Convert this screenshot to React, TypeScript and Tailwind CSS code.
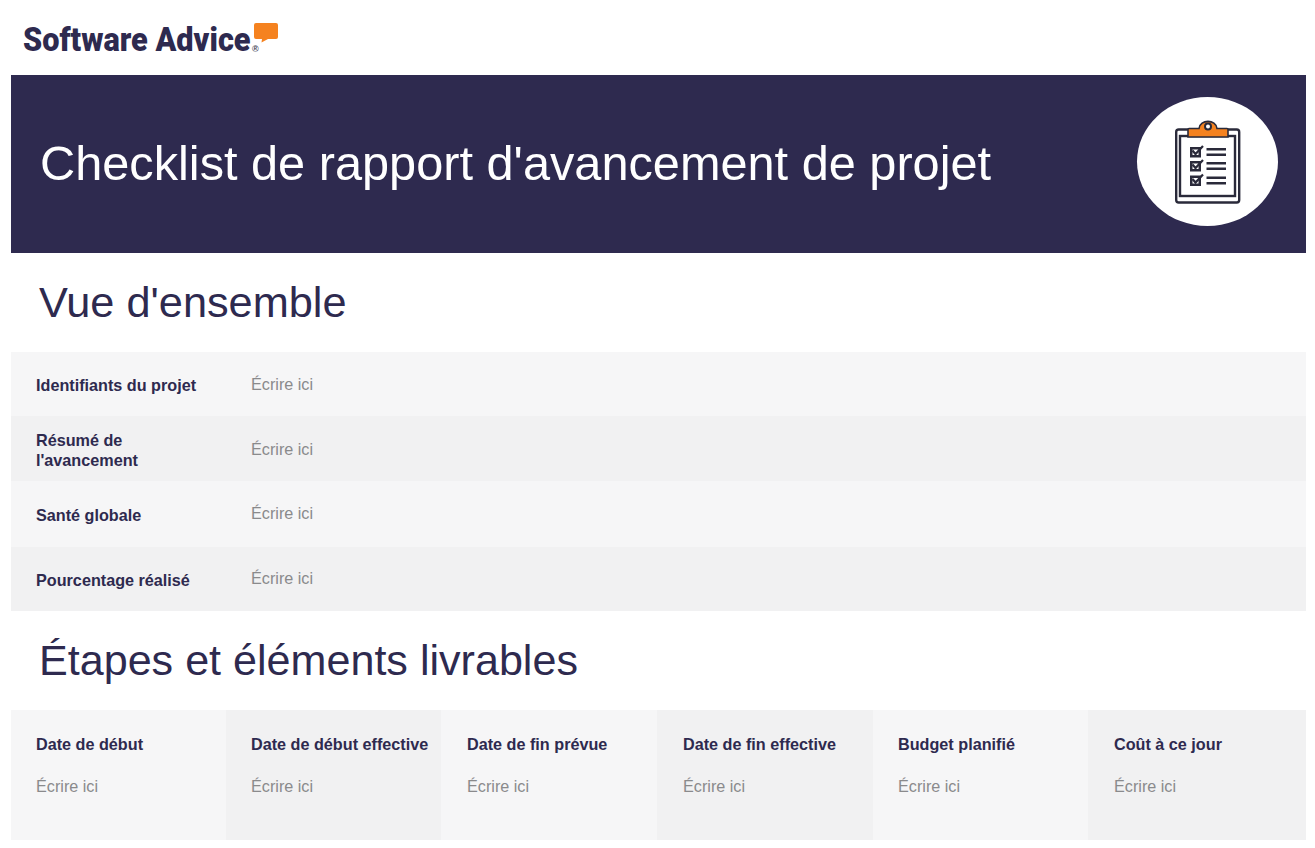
const rows = [
  { label: "Identifiants du projet", bg: "bg-[#f6f6f7]", h: "h-[64px]", labelTop: "pt-[1px]", valueTop: "mt-[1px]" },
  { label: "Résumé de l'avancement", bg: "bg-[#f1f1f2]", h: "h-[65px]", labelTop: "pt-[2px]", valueTop: "mt-[1px]" },
  { label: "Santé globale", bg: "bg-[#f6f6f7]", h: "h-[66px]", labelTop: "pt-[1px]", valueTop: "-mt-[2px]" },
  { label: "Pourcentage réalisé", bg: "bg-[#f1f1f2]", h: "h-[64px]", labelTop: "pt-[1px]", valueTop: "-mt-[1px]" },
];

const columns = [
  { label: "Date de début", bg: "bg-[#f6f6f7]", pad: "pl-[25px]" },
  { label: "Date de début effective", bg: "bg-[#f1f1f2]", pad: "pl-[25px]" },
  { label: "Date de fin prévue", bg: "bg-[#f6f6f7]", pad: "pl-[26px]" },
  { label: "Date de fin effective", bg: "bg-[#f1f1f2]", pad: "pl-[26px]" },
  { label: "Budget planifié", bg: "bg-[#f6f6f7]", pad: "pl-[25px]" },
  { label: "Coût à ce jour", bg: "bg-[#f1f1f2]", pad: "pl-[26px]" },
];

function CheckRow({ y }: { y: number }) {
  return (
    <g>
      <rect x="15" y={y} width="11" height="10.500" fill="#2a2a3a" />
      <rect x="17.500" y={y + 2.500} width="6" height="5.500" fill="#fff" />
      <path d={`M17.500 ${y + 3.500}l3 3.500 7.500-8`} stroke="#2a2a3a" strokeWidth="2.200" />
      <rect x="31.500" y={y + 1} width="19.500" height="2.500" fill="#2a2a3a" />
      <rect x="31.500" y={y + 6.500} width="19.500" height="2.500" fill="#2a2a3a" />
    </g>
  );
}

function ClipboardIcon() {
  return (
    <svg viewBox="0 0 66 84" className="w-[66px] h-[84px]" fill="none">
      <rect x="1.200" y="9.500" width="63" height="73" rx="2.500" fill="#fff" stroke="#2a2a3a" strokeWidth="2.400" />
      <rect x="5" y="16" width="55" height="60" fill="#fff" stroke="#2a2a3a" strokeWidth="2.400" />
      <path d="M14 8.500h10c1-9.500 17-9.500 18 0h10a1 1 0 0 1 1 1V17H13V9.500a1 1 0 0 1 1-1z" fill="#f5821f" stroke="#2a2a3a" strokeWidth="1.600" />
      <circle cx="33" cy="6.500" r="3" fill="#fff" stroke="#2a2a3a" strokeWidth="2" />
      <CheckRow y={27} />
      <CheckRow y={41} />
      <CheckRow y={55.500} />
    </svg>
  );
}

export default function App() {
  return (
    <div className="w-[1315px] h-[848px] bg-white overflow-hidden font-['Liberation_Sans',Arial,sans-serif] text-[#2e2a4f]">
      {/* Logo */}
      <div className="h-[75px] pl-[23px] pt-[22px] flex items-start">
        <div className="relative w-[231px] h-[36px]">
          <span className="block font-['Roboto',sans-serif] font-black text-[33px] leading-[36px] origin-left scale-x-[0.93] whitespace-nowrap">
            Software Advice
          </span>
          <span className="absolute left-[229px] top-[23px] text-[9px] leading-[9px] font-bold text-[#4a4a5a]">®</span>
        </div>
        <svg viewBox="0 0 24 20" className="w-[24px] h-[20px] shrink-0 mt-[1px]">
          <path d="M2 0h20a2 2 0 0 1 2 2v12a2 2 0 0 1-2 2h-8l-6.500 3.500L8 16H2a2 2 0 0 1-2-2V2a2 2 0 0 1 2-2z" fill="#f5821f" />
        </svg>
      </div>

      <div className="mx-[11px] w-[1295px]">
        {/* Banner */}
        <div className="h-[178px] bg-[#2e2a4f] flex items-center justify-between pl-[29px] pr-[28px]">
          <h1 className="text-white text-[48.7px] leading-none -mt-[2px]">Checklist de rapport d'avancement de projet</h1>
          <div className="w-[141px] h-[129px] rounded-[50%] bg-white flex items-center justify-center -mt-[5px]">
            <ClipboardIcon />
          </div>
        </div>

        {/* Overview */}
        <h2 className="h-[99px] pl-[28px] pt-[26px] text-[43.3px] leading-[46px]">Vue d'ensemble</h2>
        <div>
          {rows.map((row) => (
            <div key={row.label} className={`flex items-center ${row.bg} ${row.h}`}>
              <div className={`w-[215px] pl-[25px] pr-[22px] font-bold text-[16.2px] leading-[20px] ${row.labelTop}`}>{row.label}</div>
              <div className={`pl-[25px] text-[16.2px] text-[#8a8a8c] ${row.valueTop}`}>Écrire ici</div>
            </div>
          ))}
        </div>

        {/* Milestones */}
        <h2 className="h-[99px] pl-[28px] pt-[26px] text-[43.1px] leading-[46px]">Étapes et éléments livrables</h2>
        <div className="grid grid-cols-[215px_215px_216px_216px_215px_218px] h-[130px]">
          {columns.map((col) => (
            <div key={col.label} className={`${col.bg} ${col.pad} pt-[24px]`}>
              <div className="font-bold text-[16.2px] leading-[20px] whitespace-nowrap">{col.label}</div>
              <div className="mt-[22px] text-[16.2px] leading-[20px] text-[#8a8a8c]">Écrire ici</div>
            </div>
          ))}
        </div>
      </div>
    </div>
  );
}
